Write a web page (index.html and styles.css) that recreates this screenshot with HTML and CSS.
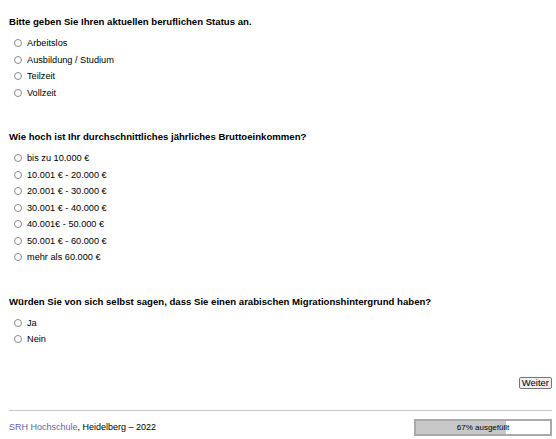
FILE: index.html
```html
<!DOCTYPE html>
<html lang="de">
<head>
<meta charset="utf-8">
<title>Umfrage</title>
<link rel="stylesheet" href="styles.css">
</head>
<body>
<div class="page">
  <form class="survey">
    <fieldset class="question">
      <legend class="q-title">Bitte geben Sie Ihren aktuellen beruflichen Status an.</legend>
      <label class="opt"><input type="radio" name="status"><span>Arbeitslos</span></label>
      <label class="opt"><input type="radio" name="status"><span>Ausbildung / Studium</span></label>
      <label class="opt"><input type="radio" name="status"><span>Teilzeit</span></label>
      <label class="opt"><input type="radio" name="status"><span>Vollzeit</span></label>
    </fieldset>
    <fieldset class="question">
      <legend class="q-title">Wie hoch ist Ihr durchschnittliches jährliches Bruttoeinkommen?</legend>
      <label class="opt"><input type="radio" name="income"><span>bis zu 10.000 €</span></label>
      <label class="opt"><input type="radio" name="income"><span>10.001 € - 20.000 €</span></label>
      <label class="opt"><input type="radio" name="income"><span>20.001 € - 30.000 €</span></label>
      <label class="opt"><input type="radio" name="income"><span>30.001 € - 40.000 €</span></label>
      <label class="opt"><input type="radio" name="income"><span>40.001€ - 50.000 €</span></label>
      <label class="opt"><input type="radio" name="income"><span>50.001 € - 60.000 €</span></label>
      <label class="opt"><input type="radio" name="income"><span>mehr als 60.000 €</span></label>
    </fieldset>
    <fieldset class="question">
      <legend class="q-title">Würden Sie von sich selbst sagen, dass Sie einen arabischen Migrationshintergrund haben?</legend>
      <label class="opt"><input type="radio" name="migr"><span>Ja</span></label>
      <label class="opt"><input type="radio" name="migr"><span>Nein</span></label>
    </fieldset>
    <div class="actions">
      <button type="button" class="next">Weiter</button>
    </div>
  </form>
  <footer class="footer">
    <div class="credit"><a class="link" href="#">SRH Hochschule</a>, Heidelberg – 2022</div>
    <div class="progress">
      <div class="progress-fill" style="width:67%"></div>
      <span class="progress-label">67% ausgefüllt</span>
    </div>
  </footer>
</div>
</body>
</html>
```

FILE: styles.css
```css
html, body {
  margin: 0;
  padding: 0;
  background: #ffffff;
}
body {
  font-family: "Liberation Sans", Arial, sans-serif;
  color: #000;
}
.page {
  padding: 15px 4px 0 9px;
}
.survey {
  display: flex;
  flex-direction: column;
}
.question {
  border: 0;
  margin: 0 0 29px 0;
  padding: 0;
  min-width: 0;
  display: flex;
  flex-direction: column;
}
.q-title {
  padding: 0;
  font-size: 9.6px;
  font-weight: bold;
  line-height: 14px;
  margin-bottom: 6px;
  float: left;
  width: 100%;
}
.opt {
  display: flex;
  align-items: center;
  height: 16.5px;
  font-size: 9.2px;
  line-height: 16.5px;
  padding-left: 5px;
}
.opt input {
  appearance: none;
  -webkit-appearance: none;
  width: 8px;
  height: 8px;
  margin: 0 5px 0 0;
  border: 1px solid #8a8a8a;
  border-radius: 50%;
  background: #fff;
  box-sizing: border-box;
}
.actions {
  display: flex;
  justify-content: flex-end;
  margin-top: 0;
}
.next {
  font-family: "Liberation Sans", Arial, sans-serif;
  font-size: 9.5px;
  line-height: 10px;
  padding: 0 2px;
  height: 12px;
  margin: 0;
  border: 1px solid #767676;
  border-radius: 2px;
  background: #efefef;
  color: #000;
}
.footer {
  margin-top: 21px;
  border-top: 1px solid #c8c8c8;
  padding-top: 8px;
  display: flex;
  justify-content: space-between;
  align-items: center;
}
.credit {
  font-size: 9px;
  line-height: 15px;
}
.link {
  color: #6363a8;
  text-decoration: none;
}
.progress {
  position: relative;
  width: 134px;
  height: 13px;
  border: 2px solid #a9a9a9;
  background: #fff;
  display: flex;
  align-items: center;
  justify-content: center;
}
.progress-fill {
  position: absolute;
  left: 0;
  top: 0;
  bottom: 0;
  background: #c8c8c8;
}
.progress-label {
  position: relative;
  font-size: 8px;
  line-height: 13px;
  color: #000;
}
```
